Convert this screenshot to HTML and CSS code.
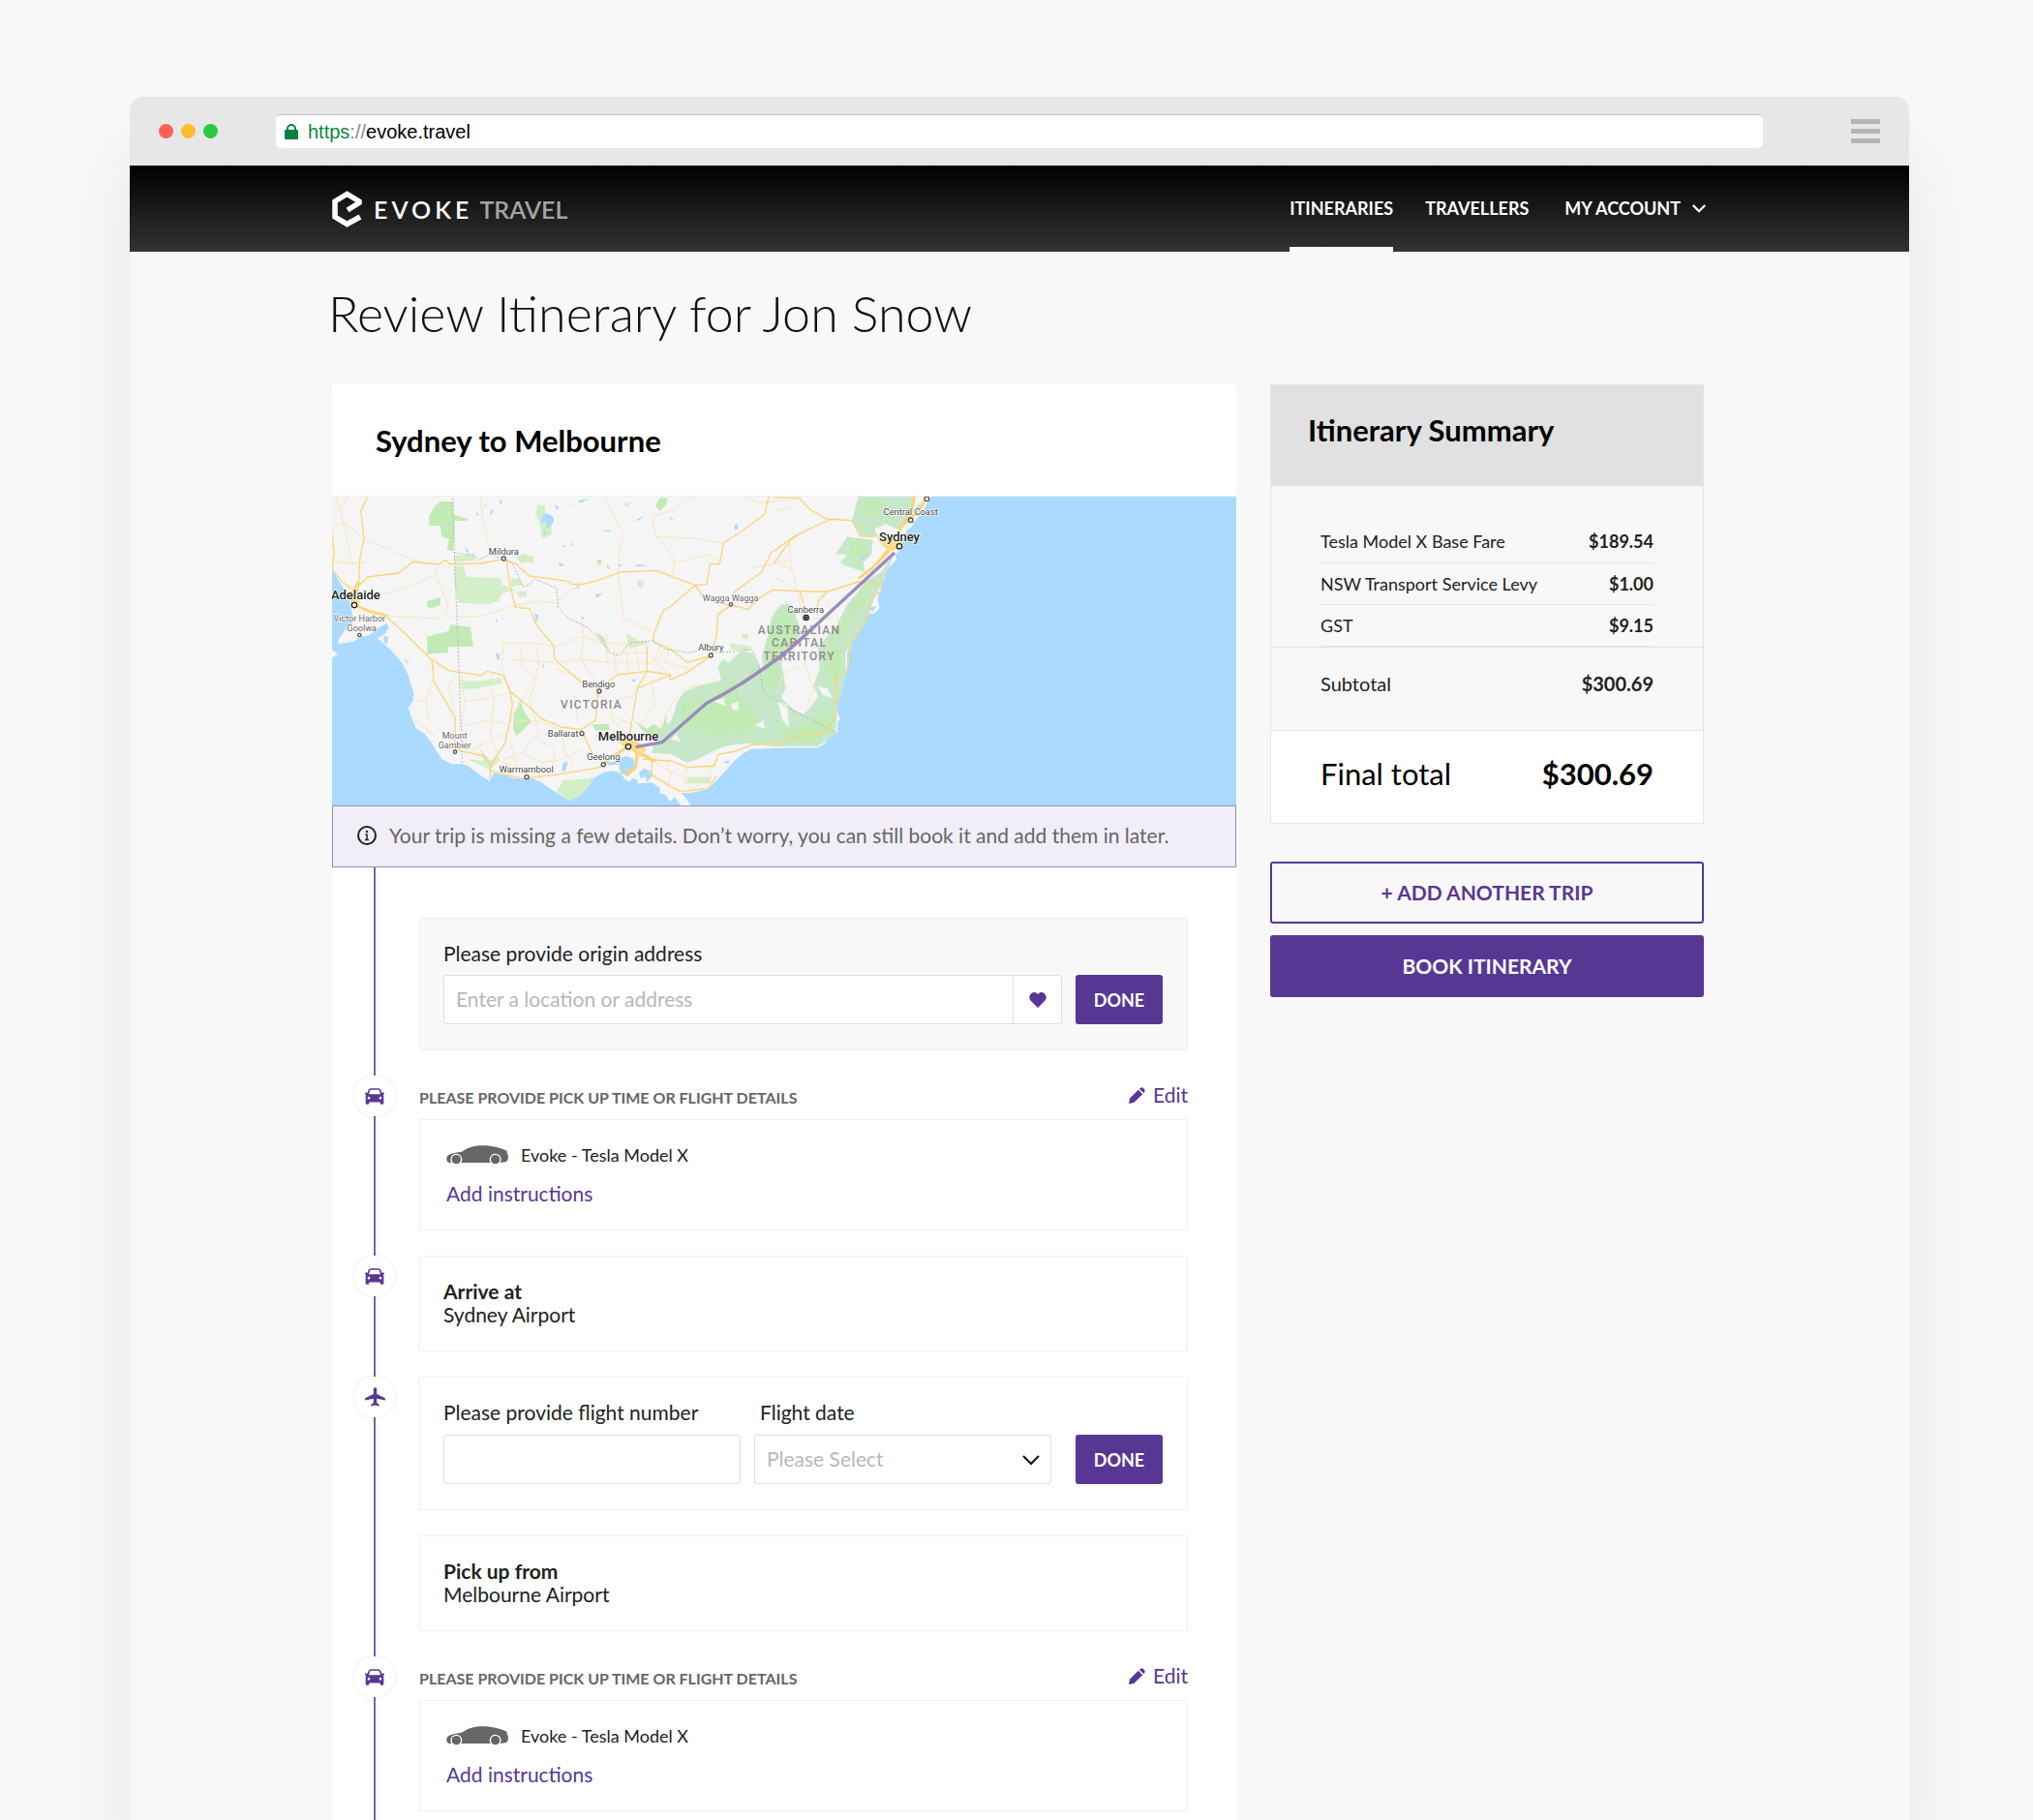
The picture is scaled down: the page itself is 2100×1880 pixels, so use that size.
FILE: index.html
```html
<!DOCTYPE html>
<html lang="en">
<head>
<meta charset="utf-8">
<meta name="viewport" content="width=device-width, initial-scale=1">
<title>Review Itinerary - Evoke Travel</title>
<link rel="stylesheet" href="styles.css">
</head>
<body>
<svg class="sprite" aria-hidden="true">
  <symbol id="icon-car" viewBox="0 0 60 50">
    <path fill-rule="evenodd" d="M19 0H41Q47 0 49 5L52 14L57 13Q60 13 60 17Q60 20 56 20Q58 22 58 26V46Q58 50 54 50H51Q47 50 47 46V43H13V46Q13 50 9 50H6Q2 50 2 46V26Q2 22 4 20Q0 20 0 17Q0 13 3 13L8 14L11 5Q13 0 19 0ZM19 5Q16 5 15 8L12 18H48L45 8Q44 5 41 5ZM12 26A4 4 0 1 0 12 34A4 4 0 1 0 12 26ZM48 26A4 4 0 1 0 48 34A4 4 0 1 0 48 26Z"/>
  </symbol>
  <symbol id="icon-plane" viewBox="0 0 62 58">
    <path d="M31 0Q36 0 36 7V20L59 31Q62 33 62 36V39L36 34V47L44 53V57L31 54L18 57V53L26 47V34L0 39V36Q0 33 3 31L26 20V7Q26 0 31 0Z"/>
  </symbol>
  <symbol id="icon-sedan" viewBox="0 0 192 60">
    <path d="M1 44Q0 36 5 32Q14 24 48 20C66 8 84 1 112 1C142 1 160 7 188 17Q186 22 191 30Q194 46 186 51L168 54H14Q2 54 1 44Z"/>
    <circle class="sedan-arch" cx="31" cy="44" r="18"/><circle class="sedan-arch" cx="152" cy="44" r="18"/>
    <circle cx="31" cy="44" r="14"/><circle cx="152" cy="44" r="14"/>
  </symbol>
  <symbol id="icon-pencil" viewBox="0 0 50 50">
    <path d="M0 50L3 34L29 8L42 21L16 46ZM32 5L36 2Q40 -1 45 4Q51 9 48 14L45 18Z"/>
  </symbol>
  <symbol id="icon-chevron" viewBox="0 0 18 11">
    <path d="M1 1L9 9L17 1" fill="none" stroke="currentColor"/>
  </symbol>
</svg>

<div class="stage">
  <div class="browser">
    <div class="chrome">
      <div class="lights"><span class="light light-red"></span><span class="light light-amber"></span><span class="light light-green"></span></div>
      <div class="address">
        <svg class="lock" viewBox="0 0 14 16" aria-hidden="true"><path d="M3 7V5A4 4 0 0 1 11 5V7" fill="none" stroke="#0b8043" stroke-width="2"/><rect y="6" width="14" height="10" rx="1" fill="#0b8043"/></svg>
        <span><span class="scheme">https</span><span class="slashes">://</span>evoke.travel</span>
      </div>
      <button class="menu" type="button" aria-label="Menu"><span></span><span></span><span></span></button>
    </div>

    <header class="site-header">
      <a class="logo" href="#">
        <svg class="logo-mark" viewBox="0 0 31 38" aria-hidden="true"><path d="M29 27L15.500 34.500L3 27V11L15.500 3.500L28 11V12.500L16 20" fill="none" stroke="#fff" stroke-width="5.500"/></svg>
        <span class="logo-name">EVOKE</span><span class="logo-sub">TRAVEL</span>
      </a>
      <nav class="nav" aria-label="Main">
        <a class="nav-link active" href="#">ITINERARIES</a>
        <a class="nav-link" href="#">TRAVELLERS</a>
        <a class="nav-link nav-account" href="#">MY ACCOUNT <svg class="nav-chevron" aria-hidden="true"><use href="#icon-chevron"/></svg></a>
      </nav>
    </header>

    <main class="page">
      <h1 class="page-title">Review Itinerary for Jon Snow</h1>
      <div class="columns">
        <section class="trip">
          <h2 class="trip-title">Sydney to Melbourne</h2>
          <svg class="map" viewBox="9 366 2802 957" preserveAspectRatio="xMidYMid slice" role="img" aria-label="Route from Sydney to Melbourne">
            <path class="land" d="M9 366H1866L1852 388L1840 412L1825 430L1812 445L1805 460L1790 470L1785 490L1770 500L1782 515L1770 530L1755 545L1758 560L1745 575L1730 590L1722 605V620L1712 635V655L1703 668L1700 685L1706 712L1690 728L1668 730L1657 748V760L1640 785L1618 815L1615 838L1605 850V880L1608 900L1596 920L1590 960L1580 985L1572 1000V1030L1585 1055L1575 1065V1100L1560 1105L1545 1115L1535 1132L1515 1144H1440L1310 1148L1285 1160L1255 1185L1230 1215L1200 1245L1175 1272L1120 1285L1092 1284L1122 1323H1090L1070 1296L1058 1312L1042 1290L1025 1285V1270L1000 1252L955 1255V1243L940 1238L930 1250L915 1240L905 1225L880 1215L850 1220L820 1240L800 1265L780 1290L745 1308L715 1290L680 1268L655 1250L630 1240H575L550 1230L510 1222L497 1248L470 1230L430 1200L410 1195H380L350 1180L330 1150L315 1125L295 1100L270 1085L255 1050L245 1020L260 1000L262 975L245 920L225 880L190 840L150 805L172 792L185 772L178 758L150 775L125 795L100 800L75 815L27 823L30 805L45 785L65 770L75 750L70 720L60 680L50 660L20 610L9 590ZM9 840L28 855L9 865Z"/>
            <path class="park-light" d="M388 548L450 545L455 562L388 570ZM388 582L415 580L425 615L530 618L535 640L580 655L535 665L525 690L490 700L400 695L390 640ZM580 555L600 542L634 552V570L590 570ZM562 620H590L600 640L565 645ZM580 660H612V675L590 678ZM645 390L668 395L672 430L690 440L688 485L660 495L650 440L640 425ZM910 390L940 380L925 398ZM405 935L455 938L530 928L538 945L450 962H408ZM955 625L975 628L972 648L955 645ZM920 790L965 815H998L930 838ZM232 872L252 875L240 885ZM465 1145L500 1185L520 1170L530 1180L498 1212L430 1180L480 1185ZM705 1280L725 1245L800 1240L825 1235L780 1290L745 1308ZM1100 1255L1120 1235H1185L1190 1202L1165 1210L1190 1205L1180 1255ZM640 365ZM1280 790L1300 795L1298 810L1280 805ZM1240 820L1310 830L1300 845L1245 838Z"/>
            <path class="park" d="M345 380L383 382L387 422L430 435L425 442L388 440V490L383 535L365 530L372 500L348 488L345 456L310 455V425L328 395ZM303 690L345 678V700L320 712L304 708ZM303 800L370 782L377 763L438 770L447 830L370 832L368 850L304 854ZM570 1085L572 1045L592 995L605 1035L627 1062L605 1085L580 1108ZM825 785L850 800L870 845L885 860L855 830ZM1010 395L1025 370H1048L1045 390L1025 410ZM830 560L845 562L842 578L832 575ZM860 570L870 590L862 592ZM765 640H780L770 655ZM945 1060L985 1085L1005 1070L1028 1085L1045 1045L1050 1115L980 1100ZM815 1072L865 1070L870 1090L825 1092Z"/>
            <path class="forest" d="M1010 1110L1060 1060L1080 1000L1100 970L1150 950L1215 935L1205 895L1220 870L1240 880L1275 845L1310 850L1335 890L1325 880L1345 905L1340 860L1360 800L1370 740L1400 700L1425 700L1440 720L1465 790L1400 870L1415 960L1400 990L1440 1025L1470 1040L1490 1020L1515 985L1500 950L1520 900L1515 830L1570 770L1605 700L1640 660L1660 630L1710 600L1750 545L1720 620L1685 690L1660 760L1600 850V900L1590 970L1575 1010L1570 1100L1515 1140H1380L1290 1130L1225 1140L1200 1150L1140 1180L1110 1190L1060 1165L1000 1160ZM1640 366H1815L1810 430L1770 470L1720 450L1700 490L1650 490L1620 440ZM1605 490L1640 495L1685 500L1680 545L1655 570L1660 600L1600 580L1585 570L1605 545L1570 545Z"/>
            <path class="park" d="M1090 1010L1140 985L1180 1000L1215 960L1260 930L1270 990L1300 1010L1330 1060L1290 1110L1240 1090L1200 1120L1150 1080L1100 1090ZM1375 750L1400 715L1430 740L1450 790L1400 850L1390 900L1400 940L1370 970L1345 930L1360 880L1350 830ZM1540 840L1590 800L1625 740L1655 700L1690 630L1650 650L1600 740L1560 790ZM1540 850L1580 820L1590 880L1560 950L1535 900ZM1500 1060L1550 1040L1560 1090L1500 1130L1420 1120L1380 1080L1440 1090ZM1660 380L1720 375L1700 430L1650 420ZM1610 500L1660 510L1670 545L1620 560Z"/>
            <path class="land" d="M1190 1000L1225 990L1228 1015ZM1245 1010L1270 1000L1268 1030L1250 1025ZM1390 1000L1420 1010L1425 1080L1405 1060ZM1060 1120L1075 1100L1090 1125ZM1320 1075L1345 1060L1350 1085ZM1690 590L1680 540L1700 500L1710 540ZM1690 465L1730 450L1720 480L1700 490ZM1515 955L1545 960L1560 990L1530 980Z"/>
            <path class="lake" d="M660 430Q668 412 690 425Q705 440 688 452L675 465L673 440L655 450ZM665 470L675 480L665 488ZM420 520L434 538L426 540ZM455 412L465 424L458 426ZM500 405L508 412L500 425ZM528 372L537 385L530 390ZM480 392L488 390L482 400ZM698 388L714 402L704 404ZM740 412L760 395L748 392L762 393ZM770 380L806 370L780 386ZM750 505L756 515L750 520ZM725 516L735 518L728 526ZM712 570L732 578L714 582ZM636 726L650 735L640 758ZM516 850L528 855V872L520 870ZM945 442L980 422L962 438ZM1052 425L1068 438H1060ZM1255 455L1265 450L1268 465L1258 470ZM852 470H872V474H852ZM935 935L950 930L948 942ZM725 1190L740 1188L732 1215L722 1218ZM168 798L184 800L180 822L170 818ZM900 1210L895 1180L920 1170L945 1180L948 1205L925 1230L905 1225ZM860 1190L890 1186L895 1196L862 1198ZM960 1222L975 1208L1000 1218L998 1235L985 1250L980 1232L965 1240ZM1220 1188L1240 1182L1238 1194ZM1645 560L1665 545L1655 562ZM1412 688L1420 695L1418 702ZM1420 866L1432 870L1430 882ZM895 575L910 578L900 584ZM950 576L990 580L955 583ZM1670 712L1695 705L1685 722ZM1820 400L1835 385L1828 405ZM660 885L668 890L664 900ZM516 745L522 750L518 760ZM780 735L792 742L788 748ZM825 670L848 665L830 680Z"/>
            <path class="road-minor" d="M9 465Q40 440 60 455T95 490M9 420L40 400L60 366M20 366Q40 420 50 470L70 570L100 590M9 570Q60 575 115 568M105 500L180 525L240 555L300 575M340 575L330 610L200 660L100 680M330 605L360 680Q375 720 350 745L180 735M470 366L475 440L490 490L495 530L540 545M375 740L480 735L570 705L640 690L700 695L740 660L780 640M855 366L890 440L915 480L900 530L895 600L905 680L910 745L1000 780M1000 430L1010 480L1060 545L1070 570L1065 610M1010 490L1130 495L1220 510M1130 366L1060 410L1000 430M1070 570L1180 545L1210 570M1290 366L1330 385L1440 375M1300 590L1440 560M540 820H640L700 830L780 800L850 820L985 825M540 820L535 900L560 960M560 870L700 880L780 870L860 880M590 820L600 890L640 930L620 1000L640 1060M640 820L650 880L640 930M700 900L760 920L830 980M780 740L790 800L780 870L820 930L830 960M860 790L860 880L900 915M880 820L890 915M920 825L925 910M950 825L960 910M880 850H985M860 880L1000 880L1040 850M1030 820L1010 870L1060 930M1060 825L1040 880L1120 900M410 920L420 1000L410 1080L430 1160M420 1000L500 990L560 975M410 1080L480 1060L560 1070M430 1160L500 1120L550 1100M500 920L510 1000L500 1100L520 1160M620 960L560 1060L640 1060L720 1090M640 1100L600 1160L540 1180M600 1160L660 1190L720 1180L780 1150M640 1060L650 1120L700 1150L690 1220M560 1120L580 1200L620 1230M510 1180L600 1210M660 1190L650 1240M720 1090L730 1160L760 1200M870 1000L880 1060L920 1100M830 980L870 1000L950 980M760 980L770 1060M850 1040L940 1070M1000 950L1010 1010L960 1080M1200 940L1100 960L1060 1010L1010 1100M320 940L300 1000L310 1060L380 1130M270 1000L300 1000M270 1060L330 1110M390 920L370 960L390 1040M1000 1180L1040 1210L1120 1240L1170 1250M1040 1180L1060 1230L1050 1260M1110 1195L1100 1260M990 1220L1060 1260M1200 1180L1170 1240L1120 1280M1440 390L1400 410L1380 400M1425 500L1430 580L1450 650M1380 570L1430 590M1380 615L1450 655M1455 660L1465 745L1560 740M1395 940L1420 910L1475 890L1500 960L1480 1020M1475 890L1470 850L1490 800M1540 690L1575 740L1600 780M1660 630L1690 660"/>
            <path class="road" d="M118 370L98 410L108 495L95 560L92 640L78 690M9 480L15 540L9 590L40 630L78 655M78 655L120 615L215 603L260 568L340 576L360 562L375 575L470 573L540 560L580 575L620 612L740 628L750 637L790 637L850 620L900 600L1015 595L1070 617L1135 640L1170 637L1180 575L1210 575L1222 510L1270 480L1350 420L1362 366M175 735L235 790L310 865L370 905L470 920L490 907L540 920L560 968L610 1010L660 1055L720 1080L780 1088L825 1060L835 960L780 940L715 885L697 865V830L640 760L620 712L578 710L560 640L550 565M560 968L568 1010L560 1060L545 1130L500 1200L480 1170L390 1150V1050L325 940L318 870M500 1200L498 1240M500 1215L600 1240L720 1225L840 1205L850 1190M780 1088L820 1170M835 960L895 918L985 907L1057 918V935L1110 910L1185 858L1200 800L1205 730L1245 703L1300 715L1340 675L1375 655L1490 660L1545 660L1640 630L1710 632V660L1680 680L1670 730L1655 765L1610 830V880L1600 912L1570 930V990L1570 1050L1530 1100L1440 1110L1400 1128L1310 1135L1260 1155L1205 1165L1195 1200L1110 1205L1060 1185L970 1180M1135 640L1160 680L1240 703M1135 640L1060 705L1035 720L1005 795V815L1060 840L1110 880M1250 665L1340 600L1370 540L1440 490L1500 460L1560 435L1620 440L1645 488L1690 490M1380 570L1430 500L1460 480M1380 370L1455 370L1490 405L1540 435L1620 440M1460 660L1470 700M1545 660L1515 690L1512 720M985 907L985 830M985 907L955 960L930 1110M1060 918L955 960M1110 880L1180 860M1000 1180L1000 1230L1050 1260L1090 1280L1175 1270L1200 1230M970 1160L1010 1185M900 1225L950 1205L955 1160"/>
            <path class="road-major" d="M78 700L120 720L180 735M78 655L90 630M925 1140L860 1185L850 1195M925 1140L955 1160L1010 1185M955 1150L950 1205L920 1232M1780 515L1720 500L1700 490M1815 366L1800 420L1770 460L1765 500L1730 540L1680 590L1640 620M1850 366L1830 410L1790 440M925 1140L890 1110M1740 520L1700 570"/>
            <path class="city" d="M895 1125L925 1115L965 1130L985 1150L960 1175L955 1150L920 1148ZM1700 500L1740 495L1775 505L1765 530L1735 535L1715 520ZM64 660L90 640L95 690L78 720L68 700Z"/>
            <path class="border" d="M383 372L388 540L400 840L412 1192M388 540L450 548L462 562L500 545L540 558L570 575L600 645L620 640L635 620L705 650L710 710L745 745L800 770L830 800L870 850L900 860L930 820L1000 812L1040 838L1120 850L1160 838L1210 850L1310 840L1330 880L1345 970L1440 1030L1575 1100"/>
            <path class="route" d="M950 1142L1032 1127L1170 1006Q1245 968 1310 924Q1400 865 1455 814L1752 540"/>
            <g class="pins"><circle cx="541" cy="558" r="6"/><circle cx="94" cy="795" r="5"/><circle cx="1245" cy="700" r="5"/><circle cx="1183" cy="858" r="6"/><circle cx="837" cy="969" r="6"/><circle cx="783" cy="1100" r="6"/><circle cx="850" cy="1196" r="6"/><circle cx="612" cy="1235" r="6"/><circle cx="390" cy="1157" r="5"/><circle cx="1802" cy="439" r="7"/><circle cx="1852" cy="373" r="7"/></g>
            <g class="pins pins-city"><circle cx="78" cy="702" r="8"/><circle cx="927" cy="1141" r="8"/><circle cx="1767" cy="520" r="8"/><circle cx="1478" cy="741" r="8"/></g>
            <circle class="capital" cx="1478" cy="741" r="5"/>
            <g class="region"><text x="813" y="1024">VICTORIA</text><text x="1457" y="792">AUSTRALIAN</text><text x="1457" y="832">CAPITAL</text><text x="1457" y="872">TERRITORY</text></g>
            <path class="route" d="M1310 924Q1400 865 1455 814L1500 772"/>
            <g class="town"><text x="541" y="545">Mildura</text><text x="1183" y="844">Albury</text><text x="835" y="956">Bendigo</text><text x="725" y="1110">Ballarat</text><text x="850" y="1183">Geelong</text><text x="611" y="1222">Warrnambool</text><text x="1477" y="725">Canberra</text><text x="1802" y="424">Central Coast</text></g>
            <g class="town town-small"><text x="94" y="753">Victor Harbor</text><text x="94" y="783">- Goolwa</text><text x="1244" y="689">Wagga Wagga</text><text x="389" y="1115">Mount</text><text x="389" y="1145">Gambier</text></g>
            <g class="town town-city"><text x="82" y="684">Adelaide</text><text x="927" y="1123">Melbourne</text><text x="1767" y="503">Sydney</text></g>
          </svg>
          <p class="notice">
            <svg class="notice-icon" viewBox="0 0 20 20" aria-hidden="true"><circle cx="10" cy="10" r="9" fill="none" stroke="#222" stroke-width="2"/><circle cx="10" cy="6" r="1.200" fill="#222"/><path d="M8.500 9H10V14M8 14.500H12" fill="none" stroke="#222" stroke-width="1.500"/></svg>
            Your trip is missing a few details. Don’t worry, you can still book it and add them in later.
          </p>

          <ol class="timeline">
            <li class="step">
              <form class="card card-form card-muted">
                <div class="field">
                  <label for="origin">Please provide origin address</label>
                  <div class="combo">
                    <input class="combo-input" id="origin" type="text" placeholder="Enter a location or address">
                    <button class="combo-button" type="button" aria-label="Favourite addresses"><svg class="heart" viewBox="0 0 18 16" aria-hidden="true"><path d="M9 16L1.500 8.500A5 5 0 0 1 2 1.500A5 5 0 0 1 8.500 1.500L9 2L9.500 1.500A5 5 0 0 1 16 1.500A5 5 0 0 1 16.500 8.500Z"/></svg></button>
                  </div>
                </div>
                <button class="done" type="submit">DONE</button>
              </form>
            </li>
            <li class="step">
              <span class="marker"><svg class="marker-car" aria-hidden="true"><use href="#icon-car"/></svg></span>
              <div class="step-head"><h3>PLEASE PROVIDE PICK UP TIME OR FLIGHT DETAILS</h3><a class="edit" href="#"><svg class="pencil" aria-hidden="true"><use href="#icon-pencil"/></svg>Edit</a></div>
              <div class="card card-vehicle">
                <div class="vehicle"><svg class="sedan" aria-hidden="true"><use href="#icon-sedan"/></svg>Evoke - Tesla Model X</div>
                <a class="instructions" href="#">Add instructions</a>
              </div>
            </li>
            <li class="step">
              <span class="marker"><svg class="marker-car" aria-hidden="true"><use href="#icon-car"/></svg></span>
              <div class="card card-place"><strong>Arrive at</strong><span>Sydney Airport</span></div>
            </li>
            <li class="step">
              <span class="marker"><svg class="marker-plane" aria-hidden="true"><use href="#icon-plane"/></svg></span>
              <form class="card card-form card-flight">
                <div class="field">
                  <label for="flight">Please provide flight number</label>
                  <input class="control" id="flight" type="text">
                </div>
                <div class="field">
                  <label class="label-inset" for="date">Flight date</label>
                  <div class="select">
                    <select class="control" id="date"><option>Please Select</option></select>
                    <svg class="select-chevron" aria-hidden="true"><use href="#icon-chevron"/></svg>
                  </div>
                </div>
                <button class="done" type="submit">DONE</button>
              </form>
            </li>
            <li class="step">
              <div class="card card-place"><strong>Pick up from</strong><span>Melbourne Airport</span></div>
            </li>
            <li class="step">
              <span class="marker"><svg class="marker-car" aria-hidden="true"><use href="#icon-car"/></svg></span>
              <div class="step-head"><h3>PLEASE PROVIDE PICK UP TIME OR FLIGHT DETAILS</h3><a class="edit" href="#"><svg class="pencil" aria-hidden="true"><use href="#icon-pencil"/></svg>Edit</a></div>
              <div class="card card-vehicle">
                <div class="vehicle"><svg class="sedan" aria-hidden="true"><use href="#icon-sedan"/></svg>Evoke - Tesla Model X</div>
                <a class="instructions" href="#">Add instructions</a>
              </div>
            </li>
          </ol>
        </section>

        <aside class="sidebar">
          <section class="summary">
            <h2 class="summary-title">Itinerary Summary</h2>
            <table class="fares">
              <tbody>
                <tr><th scope="row">Tesla Model X Base Fare</th><td>$189.54</td></tr>
                <tr><th scope="row">NSW Transport Service Levy</th><td>$1.00</td></tr>
                <tr><th scope="row">GST</th><td>$9.15</td></tr>
              </tbody>
            </table>
            <div class="subtotal"><span>Subtotal</span><strong>$300.69</strong></div>
            <div class="total"><span>Final total</span><strong>$300.69</strong></div>
          </section>
          <div class="actions">
            <button class="action action-outline" type="button">+ ADD ANOTHER TRIP</button>
            <button class="action action-solid" type="button">BOOK ITINERARY</button>
          </div>
        </aside>
      </div>
    </main>
  </div>
</div>
</body>
</html>
```

FILE: styles.css
```css
:root {
  --purple: #583794;
  --ink: #222;
  --line: #e5e5e5;
  --paper: #f8f8f8;
}

*, *::before, *::after { box-sizing: border-box; }

body {
  margin: 0;
  background: var(--paper);
  color: var(--ink);
  font: 21px/24px Lato, sans-serif;
}

h1, h2, h3, p, ol { margin: 0; padding: 0; }
a { color: inherit; text-decoration: none; }
button, input, select { margin: 0; font: inherit; border-radius: 0; }
button { padding: 0; border: 0; background: none; cursor: pointer; }
svg { display: block; flex: none; }
.sprite { position: absolute; width: 0; height: 0; }

/* Browser frame */
.stage {
  display: flex;
  min-height: 100vh;
  padding: 100px 128px 0 134px;
  overflow: hidden;
}
.browser {
  flex: 1;
  display: flex;
  flex-direction: column;
  min-width: 0;
  border-radius: 14px 14px 0 0;
  background: var(--paper);
  box-shadow: 0 60px 80px rgba(0, 0, 0, .08);
}
.chrome {
  display: flex;
  align-items: center;
  height: 71px;
  padding: 0 30px;
  border-radius: 14px 14px 0 0;
  background: #e7e7e7;
}
.lights { display: flex; gap: 8px; width: 121px; }
.light { width: 15px; height: 15px; border-radius: 50%; }
.light-red { background: #ff5f57; }
.light-amber { background: #ffbd2e; }
.light-green { background: #28ca42; }
.address {
  flex: 1;
  display: flex;
  align-items: center;
  gap: 10px;
  height: 35px;
  margin-right: 91px;
  padding: 0 9px;
  border-top: 1px solid #c4c4c4;
  border-radius: 5px;
  background: #fff;
  color: #000;
  font-family: "Liberation Sans", Arial, sans-serif;
  font-size: 20px;
}
.lock { width: 14px; height: 16px; }
.scheme { color: #0b8a3a; }
.slashes { color: #888; }
.menu { display: grid; gap: 5px; width: 30px; }
.menu span { height: 5px; background: #b3b5b4; }

/* Site header */
.site-header {
  display: flex;
  justify-content: space-between;
  height: 89px;
  padding: 0 210px 0 209px;
  background: linear-gradient(#000, #333);
  color: #fff;
}
.logo { display: flex; align-items: center; font-size: 25px; font-weight: 600; line-height: 30px; }
.logo-mark { width: 31px; height: 38px; margin-right: 12px; }
.logo-name { margin-right: 7px; letter-spacing: 4px; }
.logo-sub { color: #a5a5a5; }
.nav { display: flex; gap: 33px; font-size: 18px; font-weight: 700; }
.nav-link {
  display: flex;
  align-items: center;
  gap: 11px;
  padding-top: 4px;
  border-bottom: 5px solid transparent;
}
.nav-link.active { border-color: var(--paper); }
.nav-account { padding-left: 4px; }
.nav-chevron { width: 14px; height: 9px; margin-left: 1px; stroke-width: 3; }

/* Page */
.page { flex: 1; display: flex; flex-direction: column; padding: 33px 212px 0 209px; }
.page-title {
  margin: 0 0 44px -4px;
  color: #111;
  font-size: 52px;
  font-weight: 300;
  line-height: 60px;
}
.columns {
  flex: 1;
  display: grid;
  grid-template-columns: minmax(0, 1fr) 448px;
  gap: 35px;
}
.trip { display: flex; flex-direction: column; background: #fff; }
.trip-title {
  padding: 40px 45px 39px;
  border-bottom: 1px solid #eee;
  color: #000;
  font-size: 31px;
  line-height: 36px;
}

/* Map */
.map { width: 100%; height: 319px; background: #aadaff; }
.land { fill: #f5f5f5; }
.park-light { fill: #d2efc8; }
.park { fill: #c1eab5; }
.forest { fill: #c6e8c8; }
.lake { fill: #aadaff; }
.road, .road-minor, .road-major, .border, .route { fill: none; stroke-linejoin: round; }
.road-minor { stroke: #fbe5b8; stroke-width: 3; }
.road { stroke: #fbd479; stroke-width: 4; }
.road-major { stroke: #fcd46c; stroke-width: 8; }
.city { fill: #fcdc8a; }
.border { stroke: #b5b5b5; stroke-width: 3; stroke-dasharray: 6 5; }
.route { stroke: #9b8bbd; stroke-width: 10; }
.pins { fill: #fff; stroke: #555; stroke-width: 4; }
.pins-city { stroke: #222; }
.capital { fill: #222; }
.region, .town {
  fill: #444;
  stroke: #fff;
  stroke-width: 4;
  paint-order: stroke;
  font-family: Roboto, sans-serif;
  font-size: 28px;
  text-anchor: middle;
}
.region { fill: #8c8c8c; stroke: none; font-size: 36px; font-weight: 500; letter-spacing: 4px; }
.town-small { fill: #666; font-size: 27px; }
.town-city { fill: #222; font-size: 39px; font-weight: 500; }

.notice {
  display: flex;
  align-items: center;
  gap: 13px;
  min-height: 64px;
  padding: 0 25px 2px;
  border: 1px solid #9b8cc1;
  background: #f1eef8;
  color: #666;
}
.notice-icon { width: 20px; height: 20px; }

/* Timeline */
.timeline {
  position: relative;
  flex: 1;
  display: flex;
  flex-direction: column;
  gap: 26px;
  padding: 52px 50px 8px 23px;
  list-style: none;
}
.timeline::before {
  content: "";
  position: absolute;
  inset: 0 auto 0 43px;
  width: 2px;
  background: #7c60b0;
}
.step {
  position: relative;
  display: grid;
  grid-template-columns: 42px minmax(0, 1fr);
  column-gap: 25px;
}
.step > :not(.marker) { grid-column: 2; }
.marker {
  grid-area: 1 / 1;
  display: grid;
  place-items: center;
  width: 42px;
  height: 42px;
  border-radius: 50%;
  background: #fff;
  box-shadow: 0 0 5px rgba(0, 0, 0, .09);
  fill: var(--purple);
}
.marker-car { width: 20px; height: 17px; }
.marker-plane { width: 21px; height: 20px; }
.step-head {
  display: flex;
  justify-content: space-between;
  align-items: baseline;
  height: 45px;
  padding-top: 8px;
}
.step-head h3 { color: #666; font-size: 16px; font-weight: 700; line-height: 24px; }
.edit { display: flex; align-items: center; gap: 8px; color: var(--purple); }
.pencil { width: 17px; height: 17px; fill: var(--purple); }

.card { border: 1px solid #f0f0f0; background: #fff; }
.card-muted { background: var(--paper); }
.card-form { display: flex; align-items: flex-end; gap: 14px; padding: 24px 25px 26px 24px; }
.field { flex: 1; display: flex; flex-direction: column; gap: 10px; min-width: 0; }
.card-flight .field { gap: 11px; }
.label-inset { padding-left: 6px; }
.control, .combo {
  width: 100%;
  height: 51px;
  border: 1px solid #ddd;
  border-radius: 3px;
  background: #fff;
}
.control { padding: 0 12px 2px; }
.combo { display: flex; }
.combo-input { flex: 1; min-width: 0; padding: 0 12px 2px; border: 0; background: none; color: var(--ink); }
.combo-input::placeholder { color: #b8b8b8; opacity: 1; }
.combo-button { display: grid; place-items: center; width: 50px; border-left: 1px solid #ddd; }
.heart { width: 18px; height: 16px; fill: var(--purple); }
.select { position: relative; }
.select .control { appearance: none; color: #b8b8b8; }
.select-chevron {
  position: absolute;
  top: 21px;
  right: 12px;
  width: 18px;
  height: 11px;
  color: #111;
  stroke-width: 2;
  pointer-events: none;
}
.done {
  width: 90px;
  height: 51px;
  border-radius: 3px;
  background: var(--purple);
  color: #fff;
  font-size: 18px;
  font-weight: 700;
}
.card-flight .done { margin-left: 11px; }

.card-vehicle { display: grid; gap: 16px; padding: 24px 27px 25px; }
.vehicle { display: flex; align-items: center; gap: 13px; font-size: 18px; }
.sedan { width: 64px; height: 20px; fill: #666; }
.sedan-arch { fill: #fff; }
.instructions { color: var(--purple); }
.card-place { display: grid; padding: 24px 24px 25px; }

/* Summary */
.summary { border: 1px solid var(--line); }
.summary-title {
  padding: 28px 38px 40px;
  background: #e1e1e1;
  color: #000;
  font-size: 31px;
  line-height: 36px;
}
.fares {
  width: calc(100% - 102px);
  margin: 36px 51px 0;
  border-collapse: collapse;
  font-size: 18px;
}
.fares th, .fares td { height: 43px; padding: 0; border-bottom: 1px solid var(--line); text-align: left; font-weight: 400; }
.fares td { text-align: right; font-weight: 700; }
.subtotal, .total { display: flex; justify-content: space-between; border-top: 1px solid var(--line); }
.subtotal { padding: 25px 51px 36px; font-size: 20px; }
.total {
  padding: 26px 51px 33px;
  background: #fff;
  color: #000;
  font-size: 31px;
  line-height: 36px;
}
.actions { display: grid; gap: 12px; margin-top: 39px; }
.action { height: 64px; border: 2px solid var(--purple); border-radius: 3px; font-weight: 700; }
.action-outline { color: var(--purple); }
.action-solid { background: var(--purple); color: #fff; }
```
